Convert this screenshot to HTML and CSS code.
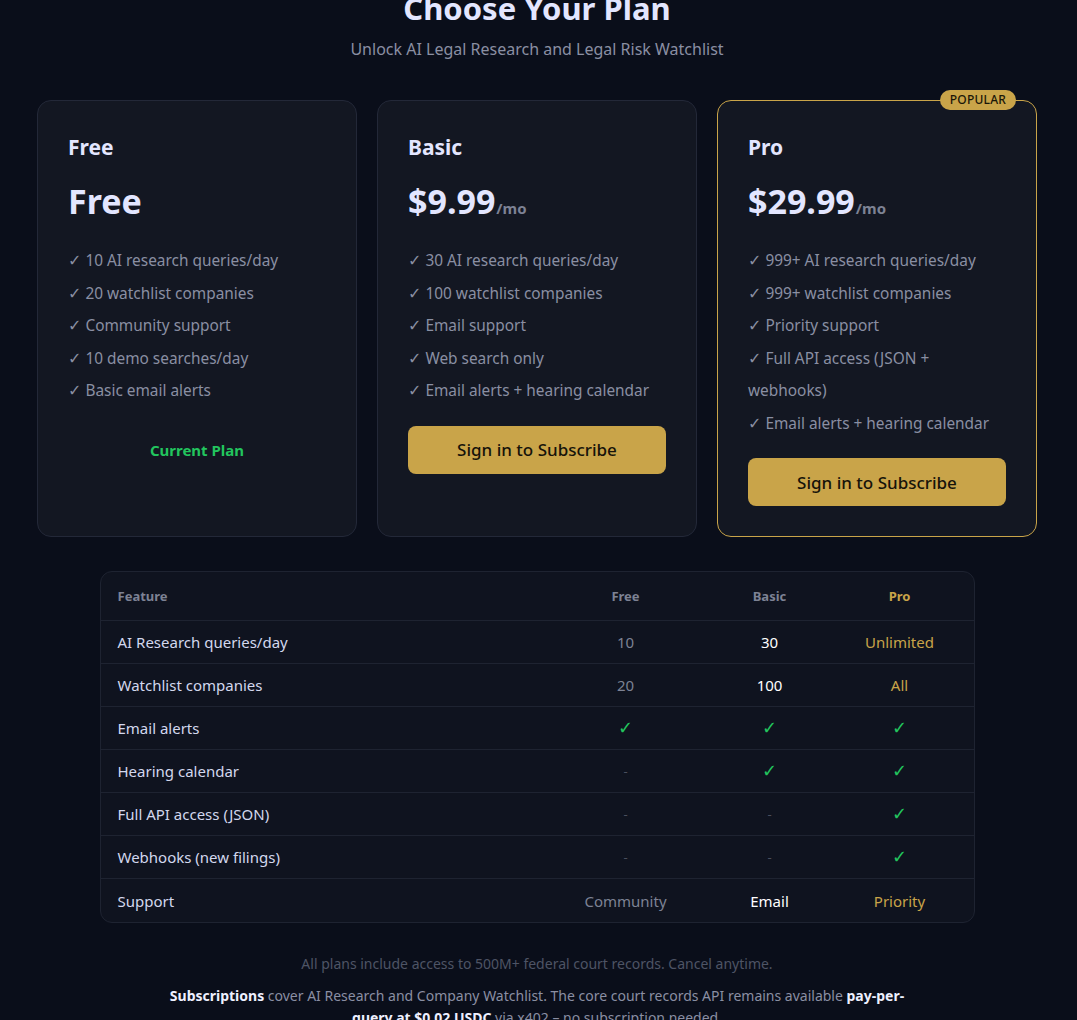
FILE: index.html
```html
<!DOCTYPE html>
<html lang="en">
<head>
<meta charset="utf-8">
<title>Choose Your Plan</title>
<link rel="stylesheet" href="styles.css">
</head>
<body>
<div class="page">
  <header class="hero">
    <h1 class="hero-title">Choose Your Plan</h1>
    <p class="hero-sub">Unlock AI Legal Research and Legal Risk Watchlist</p>
  </header>

  <section class="plans">
    <div class="card">
      <h2 class="plan-name">Free</h2>
      <div class="price">Free</div>
      <ul class="feats">
        <li><span class="tick">✓</span> 10 AI research queries/day</li>
        <li><span class="tick">✓</span> 20 watchlist companies</li>
        <li><span class="tick">✓</span> Community support</li>
        <li><span class="tick">✓</span> 10 demo searches/day</li>
        <li><span class="tick">✓</span> Basic email alerts</li>
      </ul>
      <div class="current">Current Plan</div>
    </div>

    <div class="card">
      <h2 class="plan-name">Basic</h2>
      <div class="price">$9.99<span class="per">/mo</span></div>
      <ul class="feats">
        <li><span class="tick">✓</span> 30 AI research queries/day</li>
        <li><span class="tick">✓</span> 100 watchlist companies</li>
        <li><span class="tick">✓</span> Email support</li>
        <li><span class="tick">✓</span> Web search only</li>
        <li><span class="tick">✓</span> Email alerts + hearing calendar</li>
      </ul>
      <button class="btn">Sign in to Subscribe</button>
    </div>

    <div class="card card-pro">
      <span class="badge">POPULAR</span>
      <h2 class="plan-name">Pro</h2>
      <div class="price">$29.99<span class="per">/mo</span></div>
      <ul class="feats">
        <li><span class="tick">✓</span> 999+ AI research queries/day</li>
        <li><span class="tick">✓</span> 999+ watchlist companies</li>
        <li><span class="tick">✓</span> Priority support</li>
        <li><span class="tick">✓</span> Full API access (JSON + webhooks)</li>
        <li><span class="tick">✓</span> Email alerts + hearing calendar</li>
      </ul>
      <button class="btn">Sign in to Subscribe</button>
    </div>
  </section>

  <section class="compare">
    <div class="row head">
      <div class="c-feat">Feature</div>
      <div class="c-val">Free</div>
      <div class="c-val">Basic</div>
      <div class="c-val pro-h">Pro</div>
    </div>
    <div class="row">
      <div class="c-feat">AI Research queries/day</div>
      <div class="c-val v-free">10</div>
      <div class="c-val v-basic">30</div>
      <div class="c-val v-pro">Unlimited</div>
    </div>
    <div class="row">
      <div class="c-feat">Watchlist companies</div>
      <div class="c-val v-free">20</div>
      <div class="c-val v-basic">100</div>
      <div class="c-val v-pro">All</div>
    </div>
    <div class="row">
      <div class="c-feat">Email alerts</div>
      <div class="c-val yes">✓</div>
      <div class="c-val yes">✓</div>
      <div class="c-val yes">✓</div>
    </div>
    <div class="row">
      <div class="c-feat">Hearing calendar</div>
      <div class="c-val no">-</div>
      <div class="c-val yes">✓</div>
      <div class="c-val yes">✓</div>
    </div>
    <div class="row">
      <div class="c-feat">Full API access (JSON)</div>
      <div class="c-val no">-</div>
      <div class="c-val no">-</div>
      <div class="c-val yes">✓</div>
    </div>
    <div class="row">
      <div class="c-feat">Webhooks (new filings)</div>
      <div class="c-val no">-</div>
      <div class="c-val no">-</div>
      <div class="c-val yes">✓</div>
    </div>
    <div class="row last">
      <div class="c-feat">Support</div>
      <div class="c-val v-free">Community</div>
      <div class="c-val v-basic">Email</div>
      <div class="c-val v-pro">Priority</div>
    </div>
  </section>

  <p class="note">All plans include access to 500M+ federal court records. Cancel anytime.</p>
  <p class="note2"><strong>Subscriptions</strong> cover AI Research and Company Watchlist. The core court records API remains available <strong>pay-per-query at $0.02 USDC</strong> via x402 – no subscription needed.</p>
</div>
</body>
</html>
```

FILE: styles.css
```css
* { box-sizing: border-box; }

html, body {
  margin: 0;
  padding: 0;
  background: #0a0e1a;
}

body {
  font-family: "Noto Sans", "Open Sans", "DejaVu Sans", sans-serif;
  color: #e0e4f5;
  overflow: hidden;
  padding-right: 3px;
}

.page {
  max-width: 1000px;
  margin: 0 auto;
}

.hero {
  text-align: center;
  margin-top: -12px;
}

.hero-title {
  margin: 0;
  font-size: 31px;
  line-height: 40px;
  font-weight: 700;
  color: #e3e6ff;
}

.hero-sub {
  margin: 9px 0 0;
  font-size: 16px;
  line-height: 24px;
  color: #8a8fa3;
}

.plans {
  display: grid;
  grid-template-columns: repeat(3, 1fr);
  gap: 20px;
  margin-top: 39px;
}

.card {
  position: relative;
  background: #131722;
  border: 1px solid #232838;
  border-radius: 14px;
  padding: 30px;
}

.card-pro {
  border-color: #c9a449;
}

.badge {
  position: absolute;
  top: -11px;
  right: 20px;
  background: #c9a449;
  color: #1a1608;
  font-size: 12px;
  font-weight: 500;
  line-height: 20px;
  padding: 0 10px;
  border-radius: 10px;
  letter-spacing: 0.2px;
}

.plan-name {
  margin: 0 0 16px;
  font-size: 21px;
  line-height: 32px;
  font-weight: 700;
  color: #e3e6ff;
}

.price {
  font-size: 34px;
  line-height: 44px;
  font-weight: 700;
  color: #e3e6ff;
}

.per {
  font-size: 15px;
  line-height: 1;
  font-weight: 700;
  color: #7d8294;
  margin-left: 1px;
}

.feats {
  list-style: none;
  margin: 22px 0 0;
  padding: 0;
}

.feats li {
  font-size: 15.4px;
  line-height: 32.5px;
  color: #8a8fa3;
}

.tick {
  font-family: "DejaVu Sans", sans-serif;
  font-size: 16px;
  line-height: 1;
}

.btn {
  display: block;
  width: 100%;
  margin-top: 18px;
  height: 48px;
  border: none;
  border-radius: 8px;
  background: #c9a449;
  color: #16130a;
  font-family: inherit;
  font-size: 17px;
  font-weight: 500;
  cursor: pointer;
}

.current {
  margin-top: 18px;
  height: 48px;
  line-height: 48px;
  text-align: center;
  color: #22c55e;
  font-size: 15px;
  font-weight: 700;
}

.compare {
  width: 875px;
  margin: 34px auto 0;
  background: #0f131f;
  border: 1px solid #1e2331;
  border-radius: 12px;
  overflow: hidden;
}

.row {
  display: grid;
  grid-template-columns: 437px 176px 112px 1fr;
  align-items: center;
  height: 43px;
  border-bottom: 1px solid #1e2331;
  font-size: 15px;
}

.row.last {
  border-bottom: none;
}

.row.head {
  height: 49px;
  font-size: 13px;
  font-weight: 700;
  color: #7d8294;
}

.c-feat {
  padding-left: 17px;
  color: #d3d8ee;
}

.head .c-feat {
  color: #7d8294;
}

.c-val {
  text-align: center;
}

.pro-h {
  color: #c9a449;
}

.v-free { color: #7d8294; }
.v-basic { color: #ffffff; }
.v-pro { color: #c9a449; }

.yes {
  color: #22c55e;
  font-family: "DejaVu Sans", sans-serif;
  font-size: 18px;
  line-height: 1;
}

.no {
  color: #4a4f5e;
  font-size: 13px;
}

.note {
  margin: 31px 0 0;
  text-align: center;
  font-size: 14px;
  line-height: 20px;
  color: #4e5465;
}

.note2 {
  max-width: 750px;
  margin: 11px auto 0;
  text-align: center;
  font-size: 14px;
  line-height: 22px;
  color: #8a8fa3;
}

.note2 strong {
  color: #eef0ff;
  font-weight: 700;
}
```
